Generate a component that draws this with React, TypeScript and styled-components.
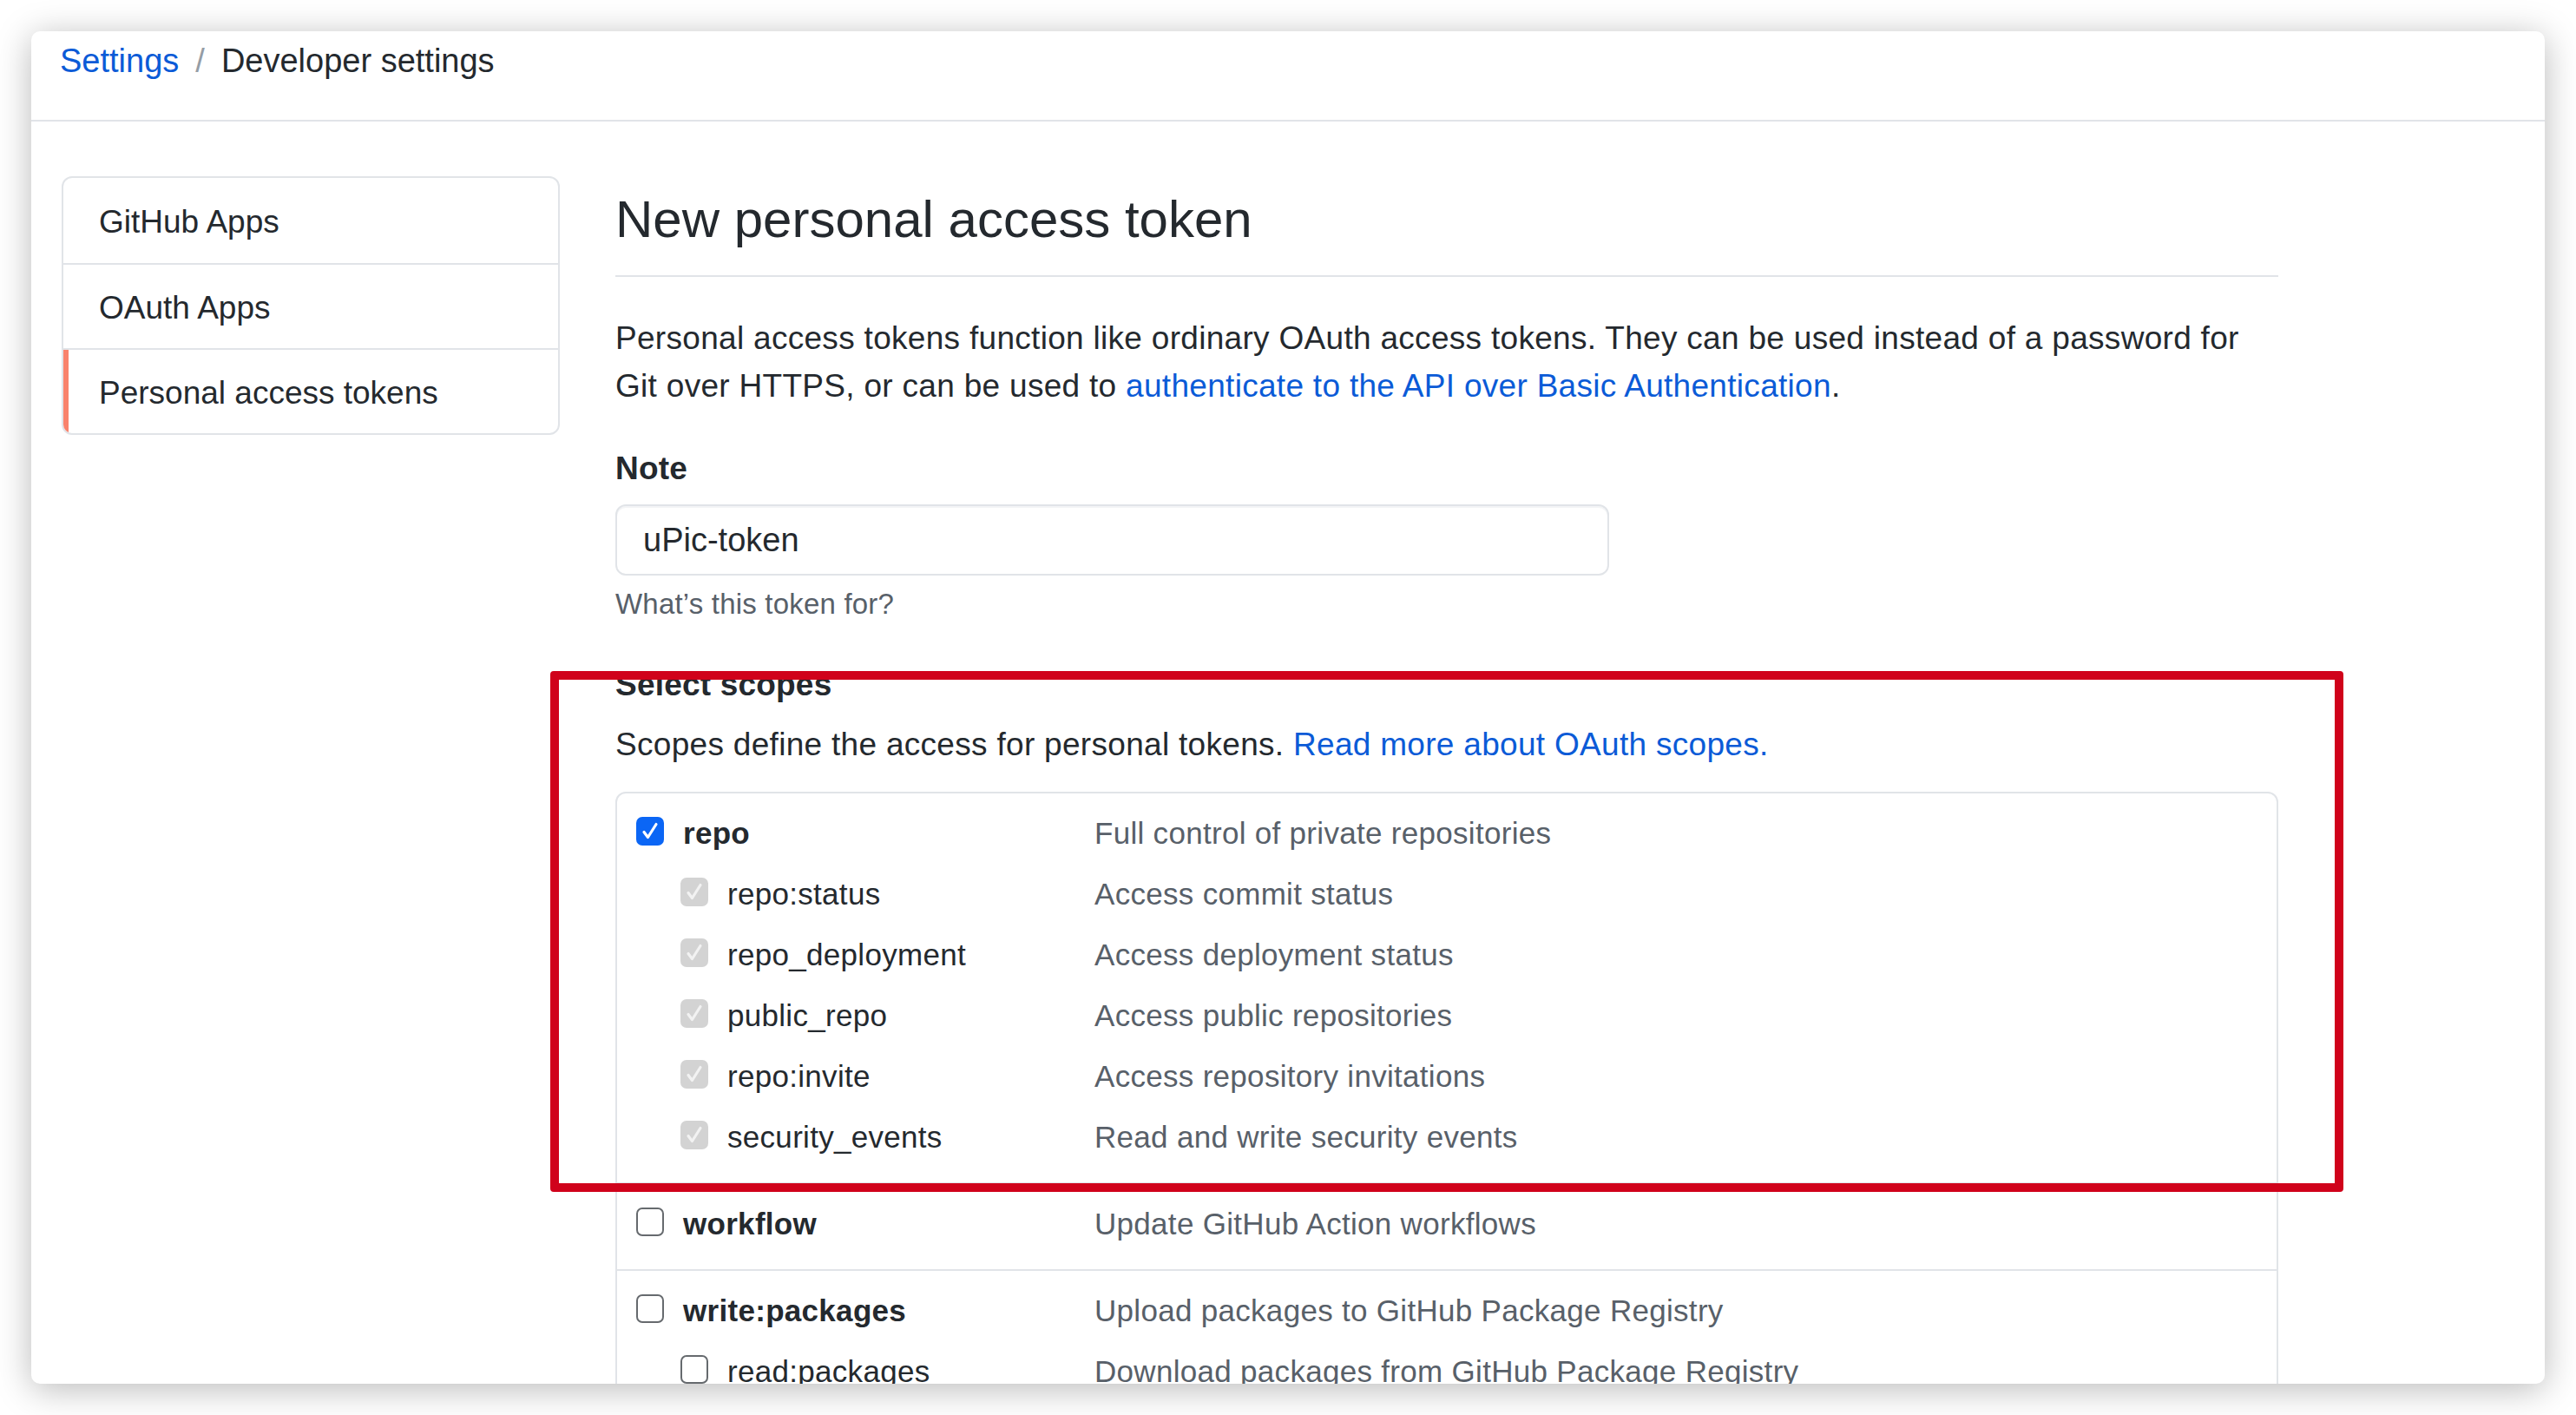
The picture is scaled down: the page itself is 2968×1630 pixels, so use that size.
import React from 'react';
import styled, { createGlobalStyle } from 'styled-components';

const GlobalStyle = createGlobalStyle`
  html, body { margin: 0; padding: 0; background: #ffffff; }
  body {
    font-family: "Liberation Sans", Arial, Helvetica, sans-serif;
    color: #24292e;
    -webkit-font-smoothing: antialiased;
  }
  * { box-sizing: border-box; }
`;

const Page = styled.div`
  width: 2968px;
  height: 1630px;
  padding: 36px;
`;

const Window = styled.div`
  height: 1558px;
  background: #ffffff;
  border-radius: 10px;
  box-shadow: 0 6px 40px rgba(0, 0, 0, 0.28);
  overflow: hidden;
  display: flex;
  flex-direction: column;
`;

const Header = styled.header`
  flex: none;
  height: 104px;
  border-bottom: 2px solid #e1e4e8;
  padding: 6px 0 0 33px;
  font-size: 38px;
  line-height: 56px;
  display: flex;
  align-items: flex-start;
`;

const Crumb = styled.a<{ $current?: boolean }>`
  color: ${(p) => (p.$current ? '#24292e' : '#0b5bd7')};
  text-decoration: none;
`;

const Slash = styled.span`
  color: #959da5;
  margin: 0 19px;
`;

const Body = styled.div`
  flex: 1;
  display: flex;
  align-items: flex-start;
  gap: 64px;
  padding: 63px 0 0 35px;
`;

const Sidebar = styled.nav`
  flex: none;
  width: 574px;
  border: 2px solid #e1e4e8;
  border-radius: 12px;
  overflow: hidden;
`;

const MenuItem = styled.a<{ $active?: boolean }>`
  position: relative;
  display: flex;
  align-items: center;
  height: 98px;
  padding-left: 41px;
  padding-top: 3px;
  font-size: 37px;
  color: #24292e;
  text-decoration: none;
  & + & {
    border-top: 2px solid #e1e4e8;
  }
  ${(p) =>
    p.$active &&
    `
    &::before {
      content: "";
      position: absolute;
      left: 0;
      top: 0;
      bottom: 0;
      width: 6px;
      background: #f9826c;
    }
  `}
`;

const Main = styled.main`
  flex: none;
  width: 1916px;
  padding-top: 12px;
`;

const Title = styled.h2`
  margin: 0;
  font-size: 60px;
  line-height: 75px;
  font-weight: 400;
  padding-bottom: 27px;
  border-bottom: 2px solid #e1e4e8;
`;

const Lead = styled.p<{ $top: number }>`
  margin: ${(p) => p.$top}px 0 0;
  max-width: 1890px;
  font-size: 37px;
  line-height: 55px;
  letter-spacing: 0.3px;
`;

const Link = styled.a`
  color: #0b5bd7;
  text-decoration: none;
`;

const Label = styled.div<{ $top: number }>`
  margin-top: ${(p) => p.$top}px;
  font-size: 37px;
  line-height: 55px;
  font-weight: 700;
  letter-spacing: 0.2px;
`;

const TextInput = styled.div`
  margin-top: 14px;
  width: 1145px;
  height: 82px;
  border: 2px solid #e1e4e8;
  border-radius: 12px;
  background: #ffffff;
  box-shadow: inset 0 2px 0 rgba(225, 228, 232, 0.4);
  display: flex;
  align-items: center;
  padding-left: 30px;
  font-size: 38px;
  color: #24292e;
`;

const Hint = styled.div`
  margin-top: 8px;
  font-size: 33px;
  line-height: 50px;
  color: #586069;
  letter-spacing: 0.2px;
`;

const ScopesSection = styled.section`
  position: relative;
`;

const Annotation = styled.div`
  position: absolute;
  left: -75px;
  top: 12px;
  width: 2066px;
  height: 600px;
  border: 10px solid #d0021b;
  border-radius: 4px;
  pointer-events: none;
  z-index: 2;
`;

const ScopeBox = styled.div`
  margin-top: 27px;
  border: 2px solid #e1e4e8;
  border-radius: 12px;
`;

const Group = styled.div`
  padding: 8px 0 20px;
  & + & {
    border-top: 2px solid #e1e4e8;
  }
`;

const Row = styled.div`
  display: flex;
  align-items: center;
  height: 70px;
  font-size: 35px;
  letter-spacing: 0.3px;
`;

const NameCell = styled.div<{ $sub?: boolean }>`
  flex: none;
  width: 550px;
  display: flex;
  align-items: center;
  gap: 22px;
  padding-left: ${(p) => (p.$sub ? 73 : 22)}px;
`;

const Name = styled.span<{ $bold?: boolean }>`
  font-weight: ${(p) => (p.$bold ? 700 : 400)};
  color: #24292e;
  margin-top: 6px;
`;

const Desc = styled.span`
  color: #586069;
  margin-top: 6px;
`;

type BoxState = 'checked' | 'disabled' | 'unchecked';

const Box = styled.span<{ $state: BoxState }>`
  flex: none;
  width: 32px;
  height: 33px;
  border-radius: 7px;
  display: flex;
  align-items: center;
  justify-content: center;
  background: ${(p) =>
    p.$state === 'checked' ? '#0b66f5' : p.$state === 'disabled' ? '#d3d3d3' : '#ffffff'};
  border: ${(p) => (p.$state === 'unchecked' ? '2.5px solid #666a6e' : 'none')};
`;

const Check: React.FC<{ state: BoxState }> = ({ state }) => (
  <Box $state={state}>
    {state !== 'unchecked' && (
      <svg width="32" height="33" viewBox="0 0 32 33">
        <path
          d="M9 17.5 L13.5 23.5 L23 8.5"
          fill="none"
          stroke={state === 'checked' ? '#ffffff' : '#f2f2f2'}
          strokeWidth="3.2"
          strokeLinecap="round"
          strokeLinejoin="round"
        />
      </svg>
    )}
  </Box>
);

type Scope = { name: string; desc: string; state: BoxState; sub?: boolean };

const groups: Scope[][] = [
  [
    { name: 'repo', desc: 'Full control of private repositories', state: 'checked' },
    { name: 'repo:status', desc: 'Access commit status', state: 'disabled', sub: true },
    { name: 'repo_deployment', desc: 'Access deployment status', state: 'disabled', sub: true },
    { name: 'public_repo', desc: 'Access public repositories', state: 'disabled', sub: true },
    { name: 'repo:invite', desc: 'Access repository invitations', state: 'disabled', sub: true },
    { name: 'security_events', desc: 'Read and write security events', state: 'disabled', sub: true },
  ],
  [{ name: 'workflow', desc: 'Update GitHub Action workflows', state: 'unchecked' }],
  [
    { name: 'write:packages', desc: 'Upload packages to GitHub Package Registry', state: 'unchecked' },
    { name: 'read:packages', desc: 'Download packages from GitHub Package Registry', state: 'unchecked', sub: true },
  ],
];

export default function App() {
  return (
    <>
      <GlobalStyle />
      <Page>
        <Window>
          <Header>
            <Crumb href="#">Settings</Crumb>
            <Slash>/</Slash>
            <Crumb $current>Developer settings</Crumb>
          </Header>
          <Body>
            <Sidebar>
              <MenuItem href="#">GitHub Apps</MenuItem>
              <MenuItem href="#">OAuth Apps</MenuItem>
              <MenuItem href="#" $active>
                Personal access tokens
              </MenuItem>
            </Sidebar>
            <Main>
              <Title>New personal access token</Title>
              <Lead $top={43}>
                Personal access tokens function like ordinary OAuth access tokens. They can be used instead of a
                password for Git over HTTPS, or can be used to{' '}
                <Link href="#">authenticate to the API over Basic Authentication</Link>.
              </Lead>
              <Label $top={40}>Note</Label>
              <TextInput>uPic-token</TextInput>
              <Hint>What’s this token for?</Hint>
              <ScopesSection>
                <Annotation />
                <Label $top={40}>Select scopes</Label>
                <Lead $top={14}>
                  Scopes define the access for personal tokens. <Link href="#">Read more about OAuth scopes.</Link>
                </Lead>
                <ScopeBox>
                  {groups.map((g, gi) => (
                    <Group key={gi}>
                      {g.map((s) => (
                        <Row key={s.name}>
                          <NameCell $sub={s.sub}>
                            <Check state={s.state} />
                            <Name $bold={!s.sub}>{s.name}</Name>
                          </NameCell>
                          <Desc>{s.desc}</Desc>
                        </Row>
                      ))}
                    </Group>
                  ))}
                </ScopeBox>
              </ScopesSection>
            </Main>
          </Body>
        </Window>
      </Page>
    </>
  );
}
